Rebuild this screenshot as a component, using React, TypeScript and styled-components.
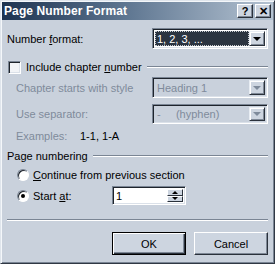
import styled, { createGlobalStyle } from 'styled-components';

const Global = createGlobalStyle`
  html, body { margin: 0; padding: 0; background: #c9d1dc; }
  body { font-family: "Liberation Sans", Arial, sans-serif; font-size: 11px; color: #000; }
`;

const Window = styled.div`
  width: 275px;
  height: 264px;
  box-sizing: border-box;
  background: #c9d1dc;
  border-top: 1px solid #dfe5ec;
  border-left: 1px solid #dfe5ec;
  border-right: 1px solid #303844;
  border-bottom: 1px solid #303844;
  box-shadow: inset 1px 1px 0 #f4f7fa, inset -1px -1px 0 #7a8594;
  display: flex;
  flex-direction: column;
`;

const TitleBar = styled.div`
  height: 18px;
  margin: 1px 1px 0 1px;
  background: linear-gradient(90deg, #1d3350 0%, #5d7590 45%, #b5c3d2 100%);
  display: flex;
  align-items: center;
  padding: 0 2px 0 2px;
`;

const Title = styled.div`
  flex: 1;
  color: #fff;
  font-weight: bold;
  font-size: 12px;
  letter-spacing: 0.1px;
`;

const CaptionBtn = styled.div<{ $gap?: boolean }>`
  width: 16px;
  height: 14px;
  box-sizing: border-box;
  background: #cdd5e0;
  border-top: 1px solid #fff;
  border-left: 1px solid #fff;
  border-right: 1px solid #2a313b;
  border-bottom: 1px solid #2a313b;
  box-shadow: inset -1px -1px 0 #7e8896;
  margin-left: ${p => (p.$gap ? '2px' : '0')};
  display: flex;
  align-items: center;
  justify-content: center;
  font-weight: bold;
  font-size: 11px;
  line-height: 1;
`;

const Body = styled.div`
  flex: 1;
  display: flex;
  flex-direction: column;
  padding: 0 6px 0 6px;
`;

const Row = styled.div<{ $mt: number; $h: number; $indent?: number }>`
  margin-top: ${p => p.$mt}px;
  height: ${p => p.$h}px;
  padding-left: ${p => p.$indent ?? 0}px;
  display: flex;
  align-items: center;
`;

const Label = styled.span<{ $disabled?: boolean; $w?: number }>`
  color: ${p => (p.$disabled ? '#7f8b9b' : '#000')};
  width: ${p => (p.$w ? `${p.$w}px` : 'auto')};
  flex: ${p => (p.$w ? 'none' : '1')};
  white-space: nowrap;
`;

const U = styled.span`
  text-decoration: underline;
`;

const Combo = styled.div<{ $disabled?: boolean }>`
  width: 116px;
  height: 100%;
  box-sizing: border-box;
  margin-left: auto;
  border-top: 1px solid #7a8594;
  border-left: 1px solid #7a8594;
  border-right: 1px solid #fff;
  border-bottom: 1px solid #fff;
  box-shadow: inset 1px 1px 0 #1e242c, inset -1px -1px 0 #dbe1e9;
  background: ${p => (p.$disabled ? '#c9d1dc' : '#fff')};
  display: flex;
  align-items: stretch;
  padding: 2px;
`;

const ComboText = styled.div<{ $selected?: boolean; $disabled?: boolean }>`
  flex: 1;
  display: flex;
  align-items: center;
  padding-left: 2px;
  color: ${p => (p.$selected ? '#fff' : p.$disabled ? '#7f8b9b' : '#000')};
  background: ${p => (p.$selected ? '#2b3440' : 'transparent')};
  outline: ${p => (p.$selected ? '1px dotted #c8ccd2' : 'none')};
  outline-offset: -1px;
  white-space: pre;
`;

const ArrowBtn = styled.div<{ $disabled?: boolean }>`
  width: 16px;
  box-sizing: border-box;
  background: #cdd5e0;
  border-top: 1px solid #e8edf3;
  border-left: 1px solid #e8edf3;
  border-right: 1px solid #2a313b;
  border-bottom: 1px solid #2a313b;
  box-shadow: inset 1px 1px 0 #fff, inset -1px -1px 0 #7e8896;
  display: flex;
  align-items: center;
  justify-content: center;
  &::after {
    content: '';
    border-left: 4px solid transparent;
    border-right: 4px solid transparent;
    border-top: 4px solid ${p => (p.$disabled ? '#7f8b9b' : '#000')};
  }
`;

const Check = styled.div`
  width: 13px;
  height: 13px;
  box-sizing: border-box;
  border-top: 1px solid #7a8594;
  border-left: 1px solid #7a8594;
  border-right: 1px solid #fff;
  border-bottom: 1px solid #fff;
  box-shadow: inset 1px 1px 0 #1e242c, inset -1px -1px 0 #dbe1e9;
  background: #f2f4f7;
  margin-right: 5px;
  margin-left: 1px;
`;

const GroupLine = styled.div`
  flex: 1;
  height: 2px;
  margin-left: 5px;
  border-top: 1px solid #7a8594;
  border-bottom: 1px solid #fff;
  box-sizing: border-box;
`;

const Radio = styled.div<{ $on?: boolean }>`
  width: 12px;
  height: 12px;
  border-radius: 50%;
  box-sizing: border-box;
  background: #fff;
  border: 1px solid;
  border-color: #7a8594 #fff #fff #7a8594;
  box-shadow: inset 1px 1px 0 #1e242c;
  margin-right: 4px;
  display: flex;
  align-items: center;
  justify-content: center;
  &::after {
    content: '';
    display: ${p => (p.$on ? 'block' : 'none')};
    width: 4px;
    height: 4px;
    border-radius: 50%;
    background: #000;
  }
`;

const Spin = styled.div`
  width: 74px;
  height: 100%;
  box-sizing: border-box;
  border-top: 1px solid #7a8594;
  border-left: 1px solid #7a8594;
  border-right: 1px solid #fff;
  border-bottom: 1px solid #fff;
  box-shadow: inset 1px 1px 0 #1e242c, inset -1px -1px 0 #dbe1e9;
  background: #fff;
  display: flex;
  padding: 2px 2px 2px 3px;
  align-items: stretch;
`;

const SpinText = styled.div`
  flex: 1;
  display: flex;
  align-items: center;
`;

const SpinBtns = styled.div`
  width: 16px;
  display: flex;
  flex-direction: column;
`;

const SpinBtn = styled.div<{ $up?: boolean }>`
  flex: 1;
  box-sizing: border-box;
  background: #cdd5e0;
  border-top: 1px solid #fff;
  border-left: 1px solid #fff;
  border-right: 1px solid #2a313b;
  border-bottom: 1px solid #2a313b;
  display: flex;
  align-items: center;
  justify-content: center;
  &::after {
    content: '';
    border-left: 3px solid transparent;
    border-right: 3px solid transparent;
    ${p => (p.$up ? 'border-bottom: 3px solid #000;' : 'border-top: 3px solid #000;')}
  }
`;

const Separator = styled.div`
  margin-top: 14px;
  height: 2px;
  box-sizing: border-box;
  border-top: 1px solid #7a8594;
  border-bottom: 1px solid #fff;
`;

const Buttons = styled.div`
  margin-top: 11px;
  height: 23px;
  display: flex;
  justify-content: flex-end;
  gap: 8px;
`;

const Button = styled.div<{ $default?: boolean }>`
  width: 74px;
  height: 100%;
  box-sizing: border-box;
  background: #cdd5e0;
  display: flex;
  align-items: center;
  justify-content: center;
  border: 1px solid ${p => (p.$default ? '#000' : '#fff')};
  ${p =>
    p.$default
      ? 'box-shadow: inset 1px 1px 0 #fff, inset -1px -1px 0 #2a313b, inset -2px -2px 0 #7e8896;'
      : 'border-right-color: #2a313b; border-bottom-color: #2a313b; box-shadow: inset -1px -1px 0 #7e8896;'}
`;

export default function App() {
  return (
    <>
      <Global />
      <Window>
        <TitleBar>
          <Title>Page Number Format</Title>
          <CaptionBtn>?</CaptionBtn>
          <CaptionBtn $gap>✕</CaptionBtn>
        </TitleBar>
        <Body>
          <Row $mt={8} $h={21}>
            <Label>Number <U>f</U>ormat:</Label>
            <Combo>
              <ComboText $selected>1, 2, 3, ...</ComboText>
              <ArrowBtn />
            </Combo>
          </Row>
          <Row $mt={11} $h={14}>
            <Check />
            <span>Include chapter <U>n</U>umber</span>
            <GroupLine />
          </Row>
          <Row $mt={3} $h={21} $indent={9}>
            <Label $disabled>Chapter starts with style</Label>
            <Combo $disabled>
              <ComboText $disabled>Heading 1</ComboText>
              <ArrowBtn $disabled />
            </Combo>
          </Row>
          <Row $mt={6} $h={20} $indent={9}>
            <Label $disabled>Use separator:</Label>
            <Combo $disabled>
              <ComboText $disabled>{'-     (hyphen)'}</ComboText>
              <ArrowBtn $disabled />
            </Combo>
          </Row>
          <Row $mt={5} $h={14} $indent={9}>
            <Label $disabled $w={64}>Examples:</Label>
            <span>1-1, 1-A</span>
          </Row>
          <Row $mt={6} $h={14}>
            <span>Page numbering</span>
            <GroupLine />
          </Row>
          <Row $mt={5} $h={14} $indent={10}>
            <Radio />
            <span><U>C</U>ontinue from previous section</span>
          </Row>
          <Row $mt={4} $h={19} $indent={10}>
            <Radio $on />
            <Label $w={79}>Start <U>a</U>t:</Label>
            <Spin>
              <SpinText>1</SpinText>
              <SpinBtns>
                <SpinBtn $up />
                <SpinBtn />
              </SpinBtns>
            </Spin>
          </Row>
          <Separator />
          <Buttons>
            <Button $default>OK</Button>
            <Button>Cancel</Button>
          </Buttons>
        </Body>
      </Window>
    </>
  );
}
